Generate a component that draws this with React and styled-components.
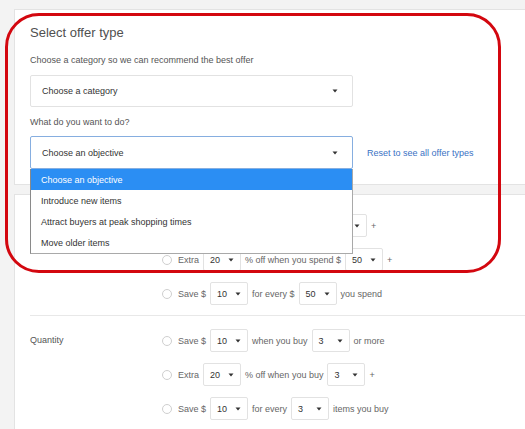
import { createGlobalStyle, styled } from "styled-components";

const GlobalStyle = createGlobalStyle`
  html, body {
    margin: 0;
    padding: 0;
    background: #f3f3f3;
    font-family: "Liberation Sans", Arial, sans-serif;
  }
  * {
    box-sizing: border-box;
  }
`;

// first group's label sits under the open menu in the screenshot, so it's left blank
const offerGroups = [
  {
    label: "",
    rows: [
      ["Save $", "10", "when you spend $", "50", "+"],
      ["Extra", "20", "% off when you spend $", "50", "+"],
      ["Save $", "10", "for every $", "50", "you spend"],
    ],
  },
  {
    label: "Quantity",
    rows: [
      ["Save $", "10", "when you buy", "3", "or more"],
      ["Extra", "20", "% off when you buy", "3", "+"],
      ["Save $", "10", "for every", "3", "items you buy"],
    ],
  },
];

const objectives = [
  "Choose an objective",
  "Introduce new items",
  "Attract buyers at peak shopping times",
  "Move older items",
];

function Caret() {
  return (
    <svg width="6" height="4" viewBox="0 0 6 4">
      <path d="M0.5 0.5h5L3 3.5z" fill="#333" />
    </svg>
  );
}

function OfferRow({ parts }) {
  const [before, first, middle, second, after] = parts;
  return (
    <OptionRow>
      <Radio />
      <span>{before}</span>
      <SmallSelect>
        {first}
        <Caret />
      </SmallSelect>
      <span>{middle}</span>
      <SmallSelect>
        {second}
        <Caret />
      </SmallSelect>
      <span>{after}</span>
    </OptionRow>
  );
}

export default function App() {
  return (
    <Page>
      <GlobalStyle />
      <TopCard>
        <Title>Select offer type</Title>
        <Hint>Choose a category so we can recommend the best offer</Hint>
        <SelectBox>
          Choose a category
          <Caret />
        </SelectBox>
        <Hint $gap={9}>What do you want to do?</Hint>
        <ObjectiveRow>
          <SelectWrap>
            <SelectBox $focused>
              Choose an objective
              <Caret />
            </SelectBox>
            <Menu>
              {objectives.map((item, i) => (
                <MenuItem key={item} $active={i === 0}>
                  {item}
                </MenuItem>
              ))}
            </Menu>
          </SelectWrap>
          <ResetLink>Reset to see all offer types</ResetLink>
        </ObjectiveRow>
      </TopCard>
      <OfferCard>
        {offerGroups.map((group, i) => (
          <OfferGroup key={i} $first={i === 0}>
            <GroupLabel>{group.label}</GroupLabel>
            <Options>
              {group.rows.map((row, j) => (
                <OfferRow key={j} parts={row} />
              ))}
            </Options>
          </OfferGroup>
        ))}
      </OfferCard>
      <Annotation />
    </Page>
  );
}

const Page = styled.div`
  position: relative;
  width: 525px;
  height: 429px;
  overflow: hidden;
  padding: 9px 0 0 14px;
`;

const Card = styled.div`
  background: #fff;
  border: 1px solid #e3e3e3;
  border-right: none;
  width: 520px;
`;

const TopCard = styled(Card)`
  padding: 14px 0 15px 15px;
`;

const OfferCard = styled(Card)`
  margin-top: 9px;
  padding: 19px 0 0 15px;
  height: 260px;
`;

const Title = styled.div`
  font-size: 13px;
  line-height: 18px;
  color: #505050;
`;

const Hint = styled.div`
  margin-top: ${(props) => props.$gap || 12}px;
  font-size: 9px;
  line-height: 12px;
  color: #555;
`;

const SelectBox = styled.div`
  margin-top: ${(props) => (props.$focused ? 0 : 9)}px;
  width: 323px;
  height: ${(props) => (props.$focused ? 33 : 32)}px;
  display: flex;
  align-items: center;
  justify-content: space-between;
  padding: 0 14px 0 11px;
  border: 1px solid ${(props) => (props.$focused ? "#86aee0" : "#e2e2e2")};
  border-radius: 2px;
  font-size: 9px;
  color: #333;
  background: #fff;
`;

const ObjectiveRow = styled.div`
  margin-top: 8px;
  display: flex;
  align-items: center;
  gap: 14px;
`;

const SelectWrap = styled.div`
  position: relative;
`;

const Menu = styled.div`
  position: absolute;
  top: 100%;
  left: 0;
  width: 323px;
  z-index: 2;
  background: #fff;
  border: 1px solid #a9a9a9;
  border-left-color: #8a8a8a;
  border-top: none;
`;

const MenuItem = styled.div`
  height: 21px;
  display: flex;
  align-items: center;
  padding-left: 10px;
  font-size: 9px;
  color: ${(props) => (props.$active ? "#fff" : "#333")};
  background: ${(props) => (props.$active ? "#2b8ef3" : "#fff")};
`;

const ResetLink = styled.a`
  font-size: 9px;
  color: #3a72c4;
  cursor: pointer;
`;

const OfferGroup = styled.div`
  display: grid;
  grid-template-columns: 132px 1fr;
  padding: ${(props) => (props.$first ? "0 0 10px" : "13px 0 11px")};
  border-bottom: ${(props) => (props.$first ? "1px solid #e8e8e8" : "none")};
`;

const GroupLabel = styled.div`
  font-size: 9px;
  line-height: 23px;
  color: #555;
`;

const Options = styled.div`
  display: flex;
  flex-direction: column;
  gap: 11px;
`;

const OptionRow = styled.div`
  display: flex;
  align-items: center;
  gap: 4px;
  height: 23px;
  font-size: 9px;
  color: #666;
`;

const Radio = styled.span`
  width: 10px;
  height: 10px;
  margin-right: 2px;
  border-radius: 50%;
  border: 1px solid #cfcfcf;
  background: #fff;
`;

const SmallSelect = styled.div`
  width: 38px;
  height: 23px;
  display: flex;
  align-items: center;
  justify-content: space-between;
  padding: 0 6px;
  border: 1px solid #e2e2e2;
  border-radius: 2px;
  color: #333;
  background: #fff;
`;

const Annotation = styled.div`
  position: absolute;
  top: 13px;
  left: 5px;
  width: 496px;
  height: 260px;
  border: 3px solid #d3070f;
  border-radius: 34px;
  pointer-events: none;
  z-index: 3;
`;
